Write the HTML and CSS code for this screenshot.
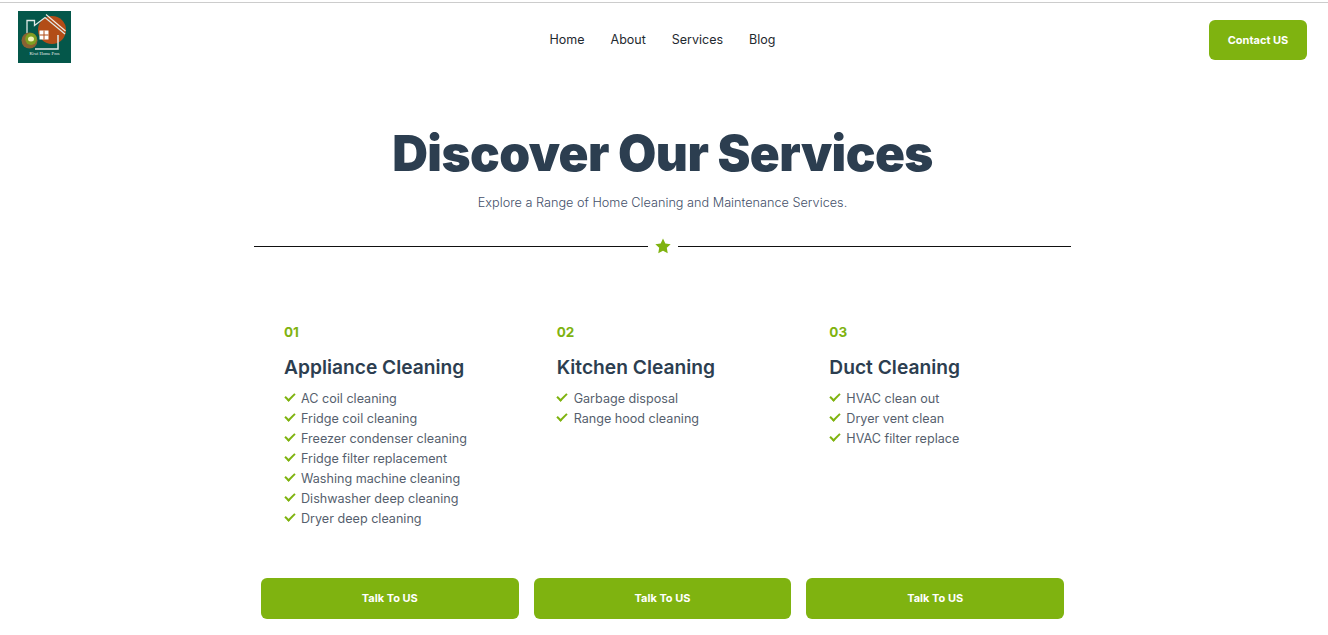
FILE: index.html
```html
<!DOCTYPE html>
<html lang="en">

<head>
    <meta charset="UTF-8">
    <meta name="viewport" content="width=device-width, initial-scale=1.0">
    <title>Kiwi Home Pros</title>
    <link rel="stylesheet" href="styles.css">
</head>

<body>
    <header class="site-header">
        <a class="logo" href="#">
            <svg width="53" height="52" viewBox="0 0 53 52">
                <rect width="53" height="52" fill="#04574a" />
                <circle cx="34" cy="19" r="14" fill="#b24d17" />
                <path d="M9 22V9.500H16.500V14.500L27 6.500L47 23" fill="none" stroke="#dfe9e6" stroke-width="1.300" />
                <path d="M28 3.500L47.500 20" fill="none" stroke="#f3e9e2" stroke-width="1.200" />
                <path d="M40 24V38H17" fill="none" stroke="#dfe9e6" stroke-width="1.500" />
                <rect x="21.500" y="19.500" width="9" height="9" fill="#fff" />
                <path d="M26 19.500V28.500M21.500 24H30.500" stroke="#b24d17" />
                <circle cx="11.500" cy="29.500" r="8" fill="#8a6233" />
                <ellipse cx="13" cy="28" rx="5.800" ry="6" fill="#7f9f22" />
                <ellipse cx="13" cy="28" rx="3" ry="2.500" fill="#f1f2b5" />
                <text class="logo-text" x="26.500" y="44" text-anchor="middle">Kiwi Home Pros</text>
            </svg>
        </a>
        <nav class="main-nav">
            <a href="#">Home</a>
            <a href="#">About</a>
            <a href="#">Services</a>
            <a href="#">Blog</a>
        </nav>
        <a class="btn btn-contact" href="#">Contact US</a>
    </header>

    <main class="services">
        <h1>Discover Our Services</h1>
        <p class="subtitle">Explore a Range of Home Cleaning and Maintenance Services.</p>

        <div class="divider">
            <span class="line"></span>
            <svg class="star" width="16" height="16" viewBox="0 0 24 24">
                <path d="M12 .8l3.500 7.300 8 1.100-5.800 5.600 1.400 8L12 19l-7.100 3.800 1.400-8L.5 9.200l8-1.100z" />
            </svg>
            <span class="line"></span>
        </div>

        <div class="service-grid">
            <section class="service">
                <div class="service-body">
                    <span class="num">01</span>
                    <h2>Appliance Cleaning</h2>
                    <ul>
                        <li>AC coil cleaning</li>
                        <li>Fridge coil cleaning</li>
                        <li>Freezer condenser cleaning</li>
                        <li>Fridge filter replacement</li>
                        <li>Washing machine cleaning</li>
                        <li>Dishwasher deep cleaning</li>
                        <li>Dryer deep cleaning</li>
                    </ul>
                </div>
                <a class="btn btn-talk" href="#">Talk To US</a>
            </section>
            <section class="service">
                <div class="service-body">
                    <span class="num">02</span>
                    <h2>Kitchen Cleaning</h2>
                    <ul>
                        <li>Garbage disposal</li>
                        <li>Range hood cleaning</li>
                    </ul>
                </div>
                <a class="btn btn-talk" href="#">Talk To US</a>
            </section>
            <section class="service">
                <div class="service-body">
                    <span class="num">03</span>
                    <h2>Duct Cleaning</h2>
                    <ul>
                        <li>HVAC clean out</li>
                        <li>Dryer vent clean</li>
                        <li>HVAC filter replace</li>
                    </ul>
                </div>
                <a class="btn btn-talk" href="#">Talk To US</a>
            </section>
        </div>
    </main>
</body>

</html>
```

FILE: styles.css
```css
body {
    font-family: Inter, "Open Sans", sans-serif;
    margin: 0;
    padding: 2px 3px 0 0;
    background-color: #fff;
    color: #2c3e50;
    overflow: hidden;
}

a {
    text-decoration: none;
}

.site-header {
    display: flex;
    align-items: flex-start;
    justify-content: space-between;
    height: 60px;
    padding: 8px 18px 0 18px;
    border-top: 1px solid #ccc;
    margin-right: -3px;
}

.logo {
    display: block;
    height: 52px;
}

.logo-text {
    font-family: "Liberation Serif", serif;
    font-size: 4.500px;
    fill: #e8f0ee;
}

.main-nav {
    display: flex;
    gap: 26px;
    margin-left: 45px;
    margin-top: 20px;
}

.main-nav a {
    font-size: 12.500px;
    line-height: 18px;
    color: #1f2a30;
}

.btn {
    display: flex;
    align-items: center;
    justify-content: center;
    background-color: #7fb310;
    color: #fff;
    font-size: 11px;
    font-weight: 700;
    border-radius: 6px;
}

.btn-contact {
    width: 98px;
    height: 40px;
    margin: 9px 3px 0 0;
}

.services {
    width: 817px;
    margin: 0 auto;
    text-align: center;
}

h1 {
    margin: 52px 0 0;
    font-size: 49.500px;
    line-height: 60px;
    font-weight: 900;
    letter-spacing: -0.6px;
}

.subtitle {
    margin: 10px 0 0;
    font-size: 12.700px;
    line-height: 20px;
    font-weight: 300;
    color: #44506a;
}

.divider {
    display: flex;
    align-items: center;
    gap: 7px;
    margin-top: 26px;
}

.line {
    flex: 1;
    border-top: 1px solid #111;
}

.star {
    fill: #7fb310;
    margin-top: -1px;
}

.service-grid {
    display: grid;
    grid-template-columns: repeat(3, 1fr);
    gap: 15px;
    padding: 0 7px;
    margin-top: 68px;
    text-align: left;
}

.service {
    display: flex;
    flex-direction: column;
}

.service-body {
    flex: 1;
    padding: 0 23px;
}

.num {
    display: block;
    font-size: 13.500px;
    line-height: 20px;
    font-weight: 700;
    color: #7fb310;
}

h2 {
    margin: 12px 0 9px;
    font-size: 19.200px;
    line-height: 26px;
    font-weight: 600;
}

ul {
    list-style: none;
    margin: 0;
    padding: 0;
}

li {
    position: relative;
    padding-left: 17px;
    font-size: 12.600px;
    line-height: 20px;
    color: #565f6e;
}

li::before {
    content: "";
    position: absolute;
    left: 0.500px;
    top: 4px;
    width: 8px;
    height: 4px;
    border-left: 2px solid #7fb310;
    border-bottom: 2px solid #7fb310;
    transform: rotate(-45deg);
}

.btn-talk {
    height: 39px;
    padding-bottom: 2px;
    margin-top: 49px;
}
```
